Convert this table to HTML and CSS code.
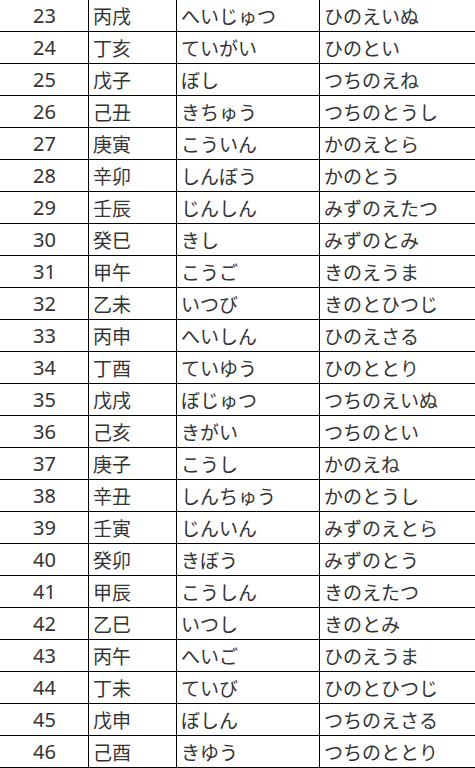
FILE: index.html
```html
<!DOCTYPE html>
<html lang="ja">
<head>
<meta charset="utf-8">
<link rel="stylesheet" href="styles.css">
</head>
<body>
<div class="frame">
<table class="eto">
<colgroup><col class="c1"><col class="c2"><col class="c3"><col class="c4"></colgroup>
<tbody>
<tr><td class="num">23</td><td>丙戌</td><td>へいじゅつ</td><td>ひのえいぬ</td></tr>
<tr><td class="num">24</td><td>丁亥</td><td>ていがい</td><td>ひのとい</td></tr>
<tr><td class="num">25</td><td>戊子</td><td>ぼし</td><td>つちのえね</td></tr>
<tr><td class="num">26</td><td>己丑</td><td>きちゅう</td><td>つちのとうし</td></tr>
<tr><td class="num">27</td><td>庚寅</td><td>こういん</td><td>かのえとら</td></tr>
<tr><td class="num">28</td><td>辛卯</td><td>しんぼう</td><td>かのとう</td></tr>
<tr><td class="num">29</td><td>壬辰</td><td>じんしん</td><td>みずのえたつ</td></tr>
<tr><td class="num">30</td><td>癸巳</td><td>きし</td><td>みずのとみ</td></tr>
<tr><td class="num">31</td><td>甲午</td><td>こうご</td><td>きのえうま</td></tr>
<tr><td class="num">32</td><td>乙未</td><td>いつび</td><td>きのとひつじ</td></tr>
<tr><td class="num">33</td><td>丙申</td><td>へいしん</td><td>ひのえさる</td></tr>
<tr><td class="num">34</td><td>丁酉</td><td>ていゆう</td><td>ひのととり</td></tr>
<tr><td class="num">35</td><td>戊戌</td><td>ぼじゅつ</td><td>つちのえいぬ</td></tr>
<tr><td class="num">36</td><td>己亥</td><td>きがい</td><td>つちのとい</td></tr>
<tr><td class="num">37</td><td>庚子</td><td>こうし</td><td>かのえね</td></tr>
<tr><td class="num">38</td><td>辛丑</td><td>しんちゅう</td><td>かのとうし</td></tr>
<tr><td class="num">39</td><td>壬寅</td><td>じんいん</td><td>みずのえとら</td></tr>
<tr><td class="num">40</td><td>癸卯</td><td>きぼう</td><td>みずのとう</td></tr>
<tr><td class="num">41</td><td>甲辰</td><td>こうしん</td><td>きのえたつ</td></tr>
<tr><td class="num">42</td><td>乙巳</td><td>いつし</td><td>きのとみ</td></tr>
<tr><td class="num">43</td><td>丙午</td><td>へいご</td><td>ひのえうま</td></tr>
<tr><td class="num">44</td><td>丁未</td><td>ていび</td><td>ひのとひつじ</td></tr>
<tr><td class="num">45</td><td>戊申</td><td>ぼしん</td><td>つちのえさる</td></tr>
<tr><td class="num">46</td><td>己酉</td><td>きゆう</td><td>つちのととり</td></tr>
</tbody>
</table>
</div>
</body>
</html>
```
FILE: styles.css
```css
html, body {
  margin: 0;
  padding: 0;
  background: #ffffff;
}
.frame {
  width: 475px;
  height: 768px;
  overflow: hidden;
}
.eto {
  border-collapse: collapse;
  table-layout: fixed;
  width: 476px;
  margin: -1px 0 0 -1px;
  font-family: "Noto Sans CJK JP", "Noto Sans", sans-serif;
  font-size: 19px;
  color: #333333;
}
.c1 { width: 89px; }
.c2 { width: 88px; }
.c3 { width: 143px; }
.c4 { width: 156px; }
.eto td {
  border: 1px solid #000000;
  height: 31px;
  padding: 0 4px;
  line-height: 30px;
  white-space: nowrap;
  overflow: hidden;
  vertical-align: middle;
}
.eto td.num {
  text-align: center;
  font-family: "Noto Sans", "Noto Sans CJK JP", sans-serif;
  font-size: 20px;
  padding-left: 5px;
}
```
